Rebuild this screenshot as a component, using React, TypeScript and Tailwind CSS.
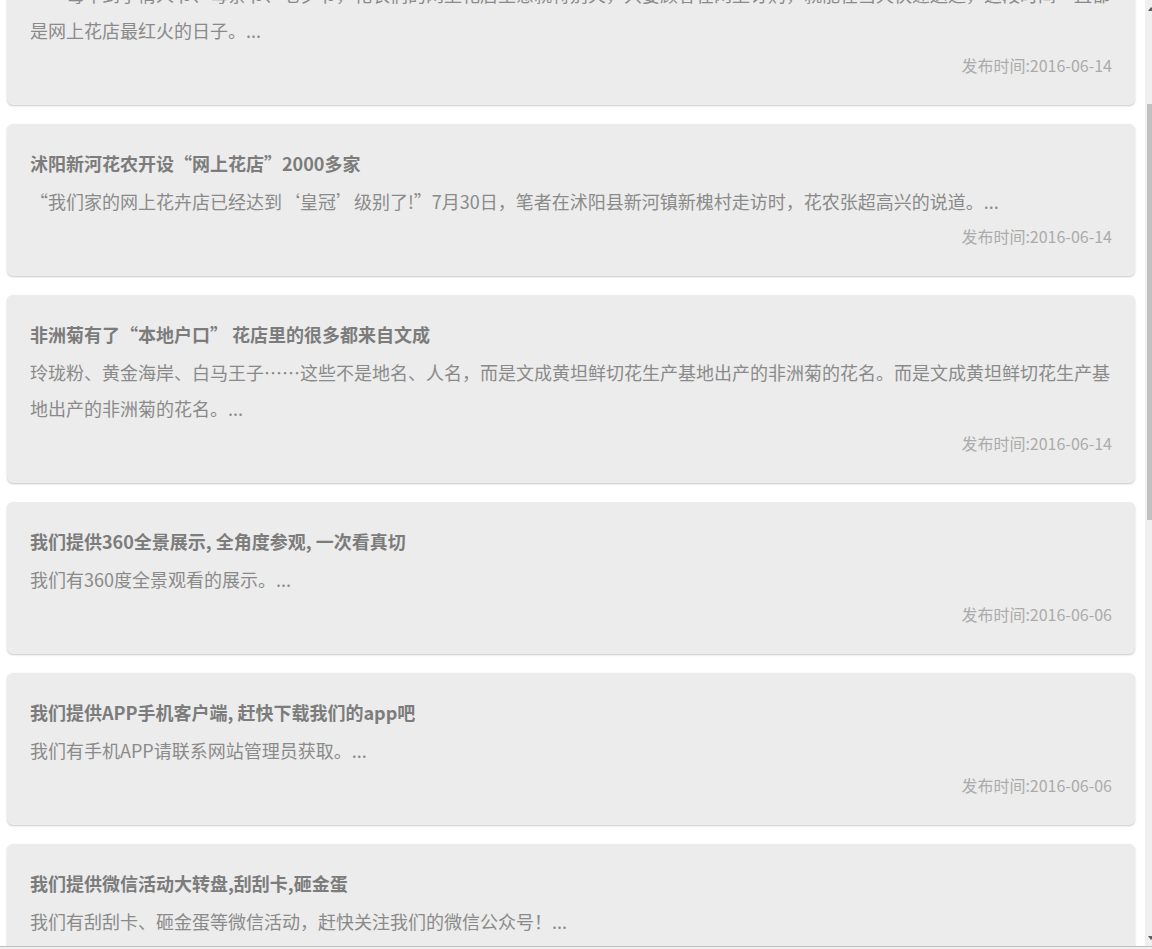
const NEWS = [
  {
    id: 1,
    title: "网上花店生意火爆 节日订单不断增加",
    body: "　　每年到了情人节、母亲节、七夕节，花农们的网上花店生意就特别火，只要顾客在网上订购，就能在当天快速送达，这段时间一直都是网上花店最红火的日子。...",
    date: "2016-06-14",
  },
  {
    id: 2,
    title: "沭阳新河花农开设“网上花店”2000多家",
    body: "“我们家的网上花卉店已经达到‘皇冠’级别了!”7月30日，笔者在沭阳县新河镇新槐村走访时，花农张超高兴的说道。...",
    date: "2016-06-14",
  },
  {
    id: 3,
    title: "非洲菊有了“本地户口” 花店里的很多都来自文成",
    body: "玲珑粉、黄金海岸、白马王子……这些不是地名、人名，而是文成黄坦鲜切花生产基地出产的非洲菊的花名。而是文成黄坦鲜切花生产基地出产的非洲菊的花名。...",
    date: "2016-06-14",
  },
  {
    id: 4,
    title: "我们提供360全景展示, 全角度参观, 一次看真切",
    body: "我们有360度全景观看的展示。...",
    date: "2016-06-06",
  },
  {
    id: 5,
    title: "我们提供APP手机客户端, 赶快下载我们的app吧",
    body: "我们有手机APP请联系网站管理员获取。...",
    date: "2016-06-06",
  },
  {
    id: 6,
    title: "我们提供微信活动大转盘,刮刮卡,砸金蛋",
    body: "我们有刮刮卡、砸金蛋等微信活动，赶快关注我们的微信公众号！...",
    date: "2016-06-06",
  },
];

export default function App() {
  return (
    <div className="h-[949px] overflow-hidden bg-white flex flex-col font-['Noto_Sans_CJK_SC','Noto_Sans',sans-serif]">
      <div className="flex flex-1 min-h-0">
        <div className="flex-1 overflow-hidden">
          <div className="-mt-[83px] flex flex-col gap-[19px] pl-[7px] pr-[10px]">
            {NEWS.map((item) => (
              <div
                key={item.id}
                className="bg-[#ececec] rounded-[6px] shadow-[0_1px_2px_rgba(0,0,0,0.22)] px-[23px] pt-[21px] pb-[23px]"
              >
                <h3 className="text-[18px] leading-[36px] font-bold text-[#7c7c7c] mb-[2px]">{item.title}</h3>
                <p className="text-[18px] leading-[36px] text-[#8a8a8a]">{item.body}</p>
                <p className="text-[16px] leading-[34px] text-[#ababab] text-right">发布时间:{item.date}</p>
              </div>
            ))}
          </div>
        </div>

        {/* scrollbar, mostly cut off by the window edge */}
        <div className="w-[7px] bg-[#f0f0f0] flex flex-col pl-[2px]">
          <svg width="5" height="20" viewBox="0 0 5 20" className="shrink-0">
            <path d="M1 11 L4 7 L5 8 L5 11 Z" fill="#606060" />
          </svg>
          <div className="h-[84px] shrink-0" />
          <div className="h-[416px] shrink-0 bg-[#c1c1c1]" />
          <div className="flex-1" />
          <svg width="5" height="14" viewBox="0 0 5 14" className="shrink-0">
            <path d="M1 4 L4 8 L5 7 L5 4 Z" fill="#606060" />
          </svg>
        </div>
      </div>
      <div className="h-[3px] shrink-0 border-t border-[#bdbdbd] bg-[#f0f0f0]" />
    </div>
  );
}
